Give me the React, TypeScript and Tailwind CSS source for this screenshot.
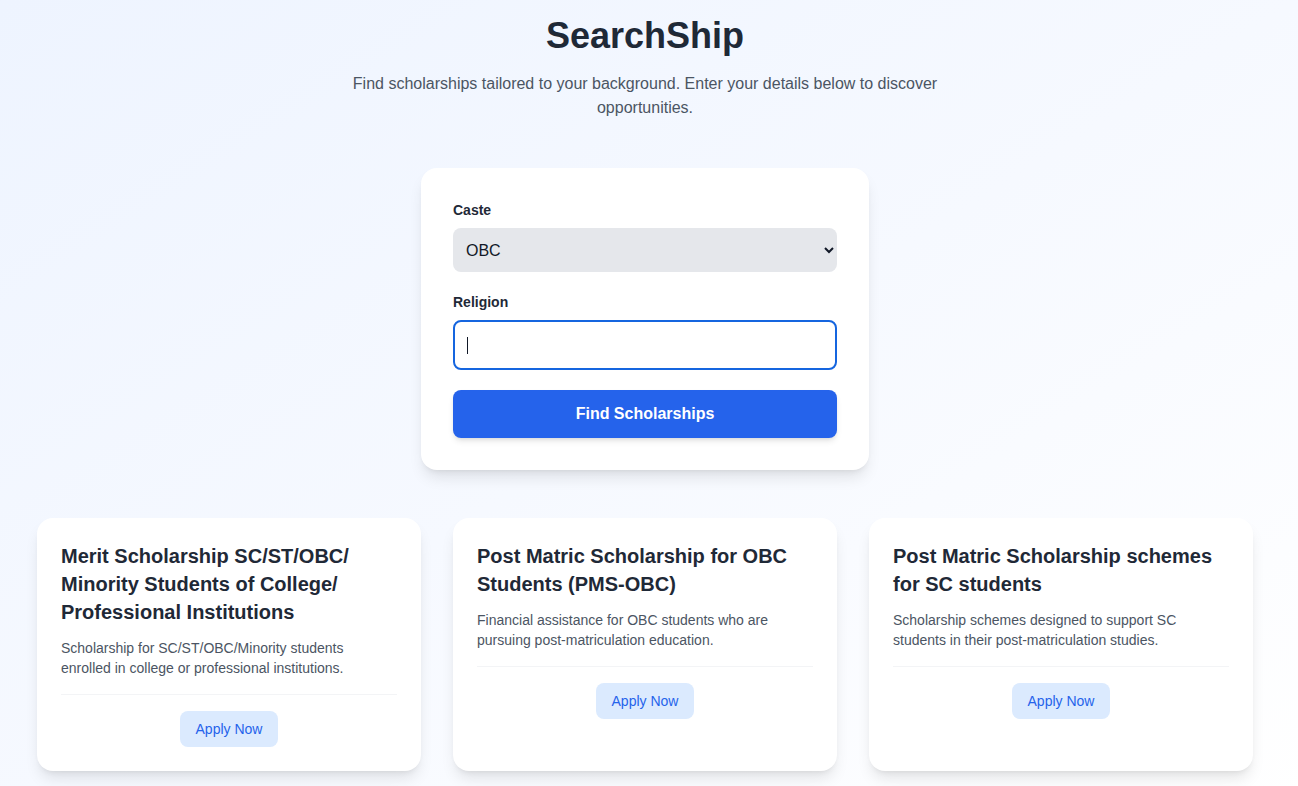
import React from 'react';

interface Scholarship {
  title: string;
  description: string;
}

const scholarships: Scholarship[] = [
  {
    title: 'Merit Scholarship SC/ST/OBC/ Minority Students of College/ Professional Institutions',
    description: 'Scholarship for SC/ST/OBC/Minority students enrolled in college or professional institutions.',
  },
  {
    title: 'Post Matric Scholarship for OBC Students (PMS-OBC)',
    description: 'Financial assistance for OBC students who are pursuing post-matriculation education.',
  },
  {
    title: 'Post Matric Scholarship schemes for SC students',
    description: 'Scholarship schemes designed to support SC students in their post-matriculation studies.',
  },
];

const ScholarshipCard = ({ title, description }: Scholarship) => (
  <div className="bg-white rounded-2xl shadow-lg p-6 flex flex-col">
    <h3 className="text-xl leading-7 font-bold text-[#1f2937]">{title}</h3>
    <p className="mt-3 text-sm leading-5 text-[#4b5563]">{description}</p>
    <div className="mt-4 pt-4 border-t border-[#f3f4f6] flex justify-center">
      <button className="px-4 py-2 rounded-lg bg-[#dbeafe] text-[#2563eb] text-sm leading-5">
        Apply Now
      </button>
    </div>
  </div>
);

export default function App() {
  const [caste, setCaste] = React.useState('OBC');
  const [religion, setReligion] = React.useState('');

  return (
    <div
      className="min-h-screen bg-gradient-to-br from-[#eef4ff] via-[#f6f9ff] to-white pr-2"
      style={{ fontFamily: '"Liberation Sans", Arial, sans-serif' }}
    >
      <div className="max-w-7xl mx-auto px-8 pt-4 pb-10">
        {/* Header */}
        <div className="text-center">
          <h1 className="text-4xl leading-10 font-bold text-[#1f2937]">SearchShip</h1>
          <p className="mt-4 max-w-2xl mx-auto text-base leading-6 text-[#4b5563]">
            Find scholarships tailored to your background. Enter your details below to discover opportunities.
          </p>
        </div>

        {/* Search form */}
        <div className="mt-12 max-w-md mx-auto bg-white rounded-2xl shadow-lg p-8">
          <label className="block text-sm leading-5 font-semibold text-[#1f2937] mb-2">Caste</label>
          <select
            value={caste}
            onChange={(e) => setCaste(e.target.value)}
            className="w-full h-11 pl-[9px] pr-[15px] rounded-lg bg-[#e5e7eb] text-base text-[#111827] outline-none"
          >
            <option>SC</option>
            <option>ST</option>
            <option>OBC</option>
            <option>General</option>
          </select>

          <label className="block mt-5 text-sm leading-5 font-semibold text-[#1f2937] mb-2">Religion</label>
          <div className="w-full h-[50px] rounded-lg border-2 border-[#1565df] flex items-center px-3">
            <span className="w-px h-[17px] bg-[#111827]" />
            <input
              value={religion}
              onChange={(e) => setReligion(e.target.value)}
              className="flex-1 min-w-0 bg-transparent outline-none text-base text-[#111827]"
            />
          </div>

          <button className="mt-5 w-full h-12 rounded-lg bg-[#2563eb] text-white font-bold text-base shadow-md">
            Find Scholarships
          </button>
        </div>

        {/* Results */}
        <div className="mt-12 grid grid-cols-3 gap-8">
          {scholarships.map((s) => (
            <ScholarshipCard key={s.title} {...s} />
          ))}
        </div>
      </div>
    </div>
  );
}
